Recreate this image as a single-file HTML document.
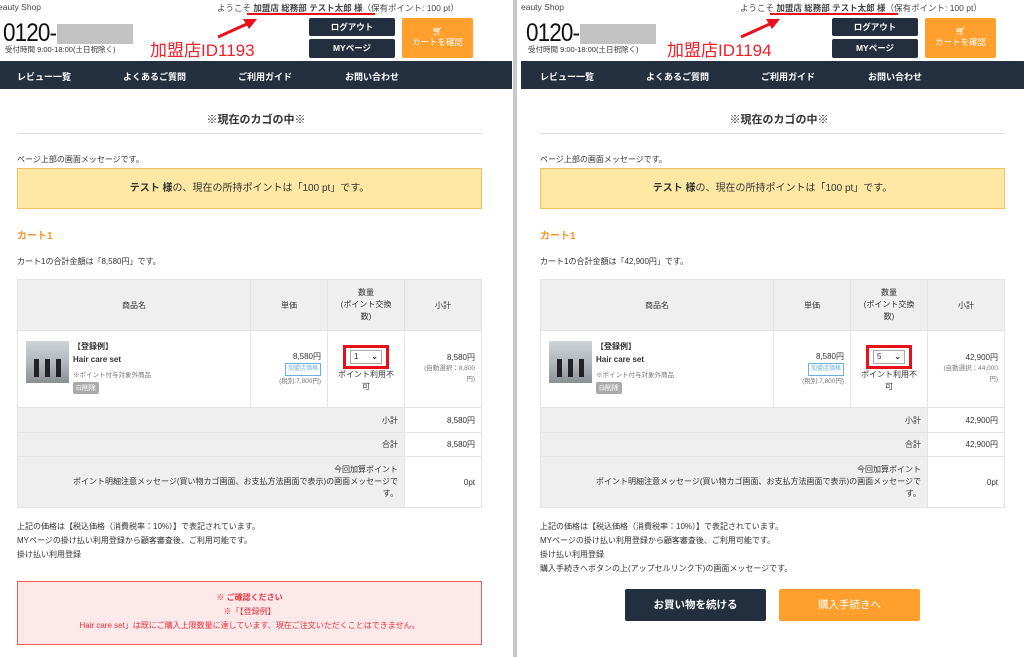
<!DOCTYPE html>
<html><head><meta charset="utf-8"><style>
*{margin:0;padding:0;box-sizing:border-box}
body{width:1024px;height:657px;overflow:hidden;background:#fff;position:relative;font-family:"Liberation Sans","Noto Sans CJK JP",sans-serif;color:#333}
.p{position:absolute;top:0;height:657px;overflow:hidden;background:#fff}
.a{position:absolute;white-space:nowrap}
.btn{position:absolute;background:#232f3e;color:#fff;font-size:8.5px;font-weight:bold;text-align:center;border-radius:2px}
.nav{position:absolute;left:0;top:61px;width:540px;height:28px;background:#243040}
.nav span{position:absolute;top:9px;color:#fff;font-size:9px;font-weight:bold}
table{position:absolute;left:17px;top:279px;width:465px;border-collapse:collapse;font-size:8px;color:#333}
td{border:1px solid #e4e4e4;vertical-align:middle}
.hd td{background:#efefef;text-align:center;height:51px}
.gr{background:#efefef;text-align:right;padding-right:6px}
.rt{text-align:right;padding-right:6px}
.small{font-size:6.5px;color:#777}
.note{font-size:8px;line-height:14px}
.tel{position:absolute;left:3px;top:19px;font-size:25px;color:#111;letter-spacing:-1px;transform:scaleX(.9);transform-origin:left}
</style></head><body>

<!-- LEFT PANEL -->
<div class="p" style="left:0;width:512px">
<div class="a" style="left:-2px;top:2px;font-size:8.5px;color:#444">eauty Shop</div>
<div class="a" style="left:217px;top:2px;font-size:8.5px;color:#444">ようこそ <b>加盟店 総務部 テスト太郎 様</b>（保有ポイント: 100 pt）</div>
<div class="a" style="left:247px;top:13px;width:128px;height:2px;background:#e8101a"></div>
<svg class="a" style="left:215px;top:17px" width="45" height="24"><line x1="3" y1="20" x2="34" y2="6" stroke="#e8101a" stroke-width="3"/><polygon points="42,2 28,2 34,12" fill="#e8101a"/></svg>
<div class="tel">0120-</div>
<div class="a" style="left:57px;top:24px;width:76px;height:20px;background:#c2c2c2"></div>
<div class="a" style="left:5px;top:44px;font-size:7.5px;color:#333">受付時間 9:00-18:00(土日祝除く)</div>
<div class="a" style="left:150px;top:36px;font-size:17px;color:#f0202a">加盟店ID1193</div>
<div class="btn" style="left:309px;top:18px;width:86px;height:18px;line-height:18px">ログアウト</div>
<div class="btn" style="left:309px;top:39px;width:86px;height:19px;line-height:19px">MYページ</div>
<div class="btn" style="left:402px;top:18px;width:71px;height:40px;background:#ffa02e;font-weight:normal;line-height:11px;padding-top:8px">🛒︎<br>カートを確認</div>
<div class="nav"><span style="left:17px">レビュー一覧</span><span style="left:123px">よくあるご質問</span><span style="left:238px">ご利用ガイド</span><span style="left:345px">お問い合わせ</span></div>
<div class="a" style="left:0;width:512px;text-align:center;top:111px;font-size:11px;font-weight:bold">※現在のカゴの中※</div>
<div class="a" style="left:17px;top:133px;width:465px;height:1px;background:#ddd"></div>
<div class="a" style="left:17px;top:154px;font-size:8px">ページ上部の画面メッセージです。</div>
<div class="a" style="left:17px;top:168px;width:465px;height:41px;background:#ffe8a3;border:1px solid #f4bf5c;text-align:center;line-height:39px;font-size:10px"><b>テスト 様</b>の、現在の所持ポイントは「100 pt」です。</div>
<div class="a" style="left:17px;top:227px;font-size:10px;font-weight:bold;color:#f5962a">カート1</div>
<div class="a" style="left:17px;top:256px;font-size:8px">カート1の合計金額は「8,580円」です。</div>
<table>
<tr class="hd"><td style="width:233px">商品名</td><td style="width:77px">単価</td><td style="width:77px;line-height:12px">数量<br>(ポイント交換<br>数)</td><td>小計</td></tr>
<tr style="height:77px"><td><div style="position:relative;height:75px">
<div class="a" style="left:8px;top:9px;width:43px;height:42px;background:linear-gradient(#d0d4d8,#aeb4ba 55%,#8a8f94)"><div style="position:absolute;left:8px;top:18px;width:5px;height:18px;background:#222"></div><div style="position:absolute;left:19px;top:18px;width:5px;height:18px;background:#222"></div><div style="position:absolute;left:30px;top:18px;width:5px;height:18px;background:#222"></div></div>
<div class="a" style="left:55px;top:9px;font-weight:bold">【登録例】</div>
<div class="a" style="left:55px;top:23px;font-weight:bold">Hair care set</div>
<div class="a small" style="left:55px;top:37px">※ポイント付与対象外商品</div>
<div class="a" style="left:55px;top:50px;background:#aaa;color:#fff;font-size:7px;padding:1px 3px;border-radius:2px">⊟削除</div>
</div></td>
<td class="rt" style="line-height:11px"><div>8,580円</div><div style="display:inline-block;border:1px solid #6ab0e0;color:#6ab0e0;font-size:6px;padding:0 2px">加盟店価格</div><div class="small">(税別:7,800円)</div></td>
<td style="text-align:center;line-height:12px"><div style="display:inline-block;border:3px solid #e8101a;padding:2px 4px"><div style="width:32px;height:14px;border:1px solid #aaa;text-align:left;padding-left:3px;font-size:8px;line-height:12px">1 <b style="float:right;margin-right:3px">⌄</b></div></div><div>ポイント利用不<br>可</div></td>
<td class="rt" style="line-height:10px">8,580円<br><span class="small">(自動選択：8,800<br>円)</span></td></tr>
<tr style="height:25px"><td class="gr" colspan="3">小計</td><td class="rt">8,580円</td></tr>
<tr style="height:24px"><td class="gr" colspan="3">合計</td><td class="rt">8,580円</td></tr>
<tr style="height:51px"><td class="gr" colspan="3" style="line-height:12px">今回加算ポイント<br>ポイント明細注意メッセージ(買い物カゴ画面、お支払方法画面で表示)の画面メッセージで<br>す。</td><td class="rt">0pt</td></tr>
</table>
<div class="a note" style="left:17px;top:520px">上記の価格は【税込価格（消費税率：10%）】で表記されています。<br>MYページの掛け払い利用登録から顧客審査後、ご利用可能です。<br>掛け払い利用登録</div>
<div class="a" style="left:17px;top:581px;width:465px;height:64px;background:#fde8ea;border:1px solid #f45a5a;text-align:center;color:#f0303a;font-size:8px;line-height:14px;padding-top:9px"><b>※ ご確認ください</b><br>※「【登録例】<br>Hair care set」は既にご購入上限数量に達しています、現在ご注文いただくことはできません。</div>
</div>

<div class="a" style="left:513px;top:0;width:4px;height:657px;background:#c8c8c8"></div>

<!-- RIGHT PANEL -->
<div class="p" style="left:517px;width:507px">
<div style="position:absolute;left:6px;top:0;width:512px;height:657px">
<div class="a" style="left:-2px;top:2px;font-size:8.5px;color:#444">eauty Shop</div>
<div class="a" style="left:217px;top:2px;font-size:8.5px;color:#444">ようこそ <b>加盟店 総務部 テスト太郎 様</b>（保有ポイント: 100 pt）</div>
<div class="a" style="left:247px;top:13px;width:128px;height:2px;background:#e8101a"></div>
<svg class="a" style="left:215px;top:17px" width="45" height="24"><line x1="3" y1="20" x2="34" y2="6" stroke="#e8101a" stroke-width="3"/><polygon points="42,2 28,2 34,12" fill="#e8101a"/></svg>
<div class="tel">0120-</div>
<div class="a" style="left:57px;top:24px;width:76px;height:20px;background:#c2c2c2"></div>
<div class="a" style="left:5px;top:44px;font-size:7.5px;color:#333">受付時間 9:00-18:00(土日祝除く)</div>
<div class="a" style="left:144px;top:36px;font-size:17px;color:#f0202a">加盟店ID1194</div>
<div class="btn" style="left:309px;top:18px;width:86px;height:18px;line-height:18px">ログアウト</div>
<div class="btn" style="left:309px;top:39px;width:86px;height:19px;line-height:19px">MYページ</div>
<div class="btn" style="left:402px;top:18px;width:71px;height:40px;background:#ffa02e;font-weight:normal;line-height:11px;padding-top:8px">🛒︎<br>カートを確認</div>
<div class="nav" style="left:-2px"><span style="left:19px">レビュー一覧</span><span style="left:125px">よくあるご質問</span><span style="left:240px">ご利用ガイド</span><span style="left:347px">お問い合わせ</span></div>
<div class="a" style="left:0;width:512px;text-align:center;top:111px;font-size:11px;font-weight:bold">※現在のカゴの中※</div>
<div class="a" style="left:17px;top:133px;width:465px;height:1px;background:#ddd"></div>
<div class="a" style="left:17px;top:154px;font-size:8px">ページ上部の画面メッセージです。</div>
<div class="a" style="left:17px;top:168px;width:465px;height:41px;background:#ffe8a3;border:1px solid #f4bf5c;text-align:center;line-height:39px;font-size:10px"><b>テスト 様</b>の、現在の所持ポイントは「100 pt」です。</div>
<div class="a" style="left:17px;top:227px;font-size:10px;font-weight:bold;color:#f5962a">カート1</div>
<div class="a" style="left:17px;top:256px;font-size:8px">カート1の合計金額は「42,900円」です。</div>
<table>
<tr class="hd"><td style="width:233px">商品名</td><td style="width:77px">単価</td><td style="width:77px;line-height:12px">数量<br>(ポイント交換<br>数)</td><td>小計</td></tr>
<tr style="height:77px"><td><div style="position:relative;height:75px">
<div class="a" style="left:8px;top:9px;width:43px;height:42px;background:linear-gradient(#d0d4d8,#aeb4ba 55%,#8a8f94)"><div style="position:absolute;left:8px;top:18px;width:5px;height:18px;background:#222"></div><div style="position:absolute;left:19px;top:18px;width:5px;height:18px;background:#222"></div><div style="position:absolute;left:30px;top:18px;width:5px;height:18px;background:#222"></div></div>
<div class="a" style="left:55px;top:9px;font-weight:bold">【登録例】</div>
<div class="a" style="left:55px;top:23px;font-weight:bold">Hair care set</div>
<div class="a small" style="left:55px;top:37px">※ポイント付与対象外商品</div>
<div class="a" style="left:55px;top:50px;background:#aaa;color:#fff;font-size:7px;padding:1px 3px;border-radius:2px">⊟削除</div>
</div></td>
<td class="rt" style="line-height:11px"><div>8,580円</div><div style="display:inline-block;border:1px solid #6ab0e0;color:#6ab0e0;font-size:6px;padding:0 2px">加盟店価格</div><div class="small">(税別:7,800円)</div></td>
<td style="text-align:center;line-height:12px"><div style="display:inline-block;border:3px solid #e8101a;padding:2px 4px"><div style="width:32px;height:14px;border:1px solid #aaa;text-align:left;padding-left:3px;font-size:8px;line-height:12px">5 <b style="float:right;margin-right:3px">⌄</b></div></div><div>ポイント利用不<br>可</div></td>
<td class="rt" style="line-height:10px">42,900円<br><span class="small">(自動選択：44,000<br>円)</span></td></tr>
<tr style="height:25px"><td class="gr" colspan="3">小計</td><td class="rt">42,900円</td></tr>
<tr style="height:24px"><td class="gr" colspan="3">合計</td><td class="rt">42,900円</td></tr>
<tr style="height:51px"><td class="gr" colspan="3" style="line-height:12px">今回加算ポイント<br>ポイント明細注意メッセージ(買い物カゴ画面、お支払方法画面で表示)の画面メッセージで<br>す。</td><td class="rt">0pt</td></tr>
</table>
<div class="a note" style="left:17px;top:520px">上記の価格は【税込価格（消費税率：10%）】で表記されています。<br>MYページの掛け払い利用登録から顧客審査後、ご利用可能です。<br>掛け払い利用登録<br>購入手続きへボタンの上(アップセルリンク下)の画面メッセージです。</div>
<div class="btn" style="left:102px;top:589px;width:141px;height:32px;line-height:32px;font-size:10.5px">お買い物を続ける</div>
<div class="btn" style="left:256px;top:589px;width:141px;height:32px;line-height:32px;font-size:10.5px;background:#ffa02e;font-weight:normal">購入手続きへ</div>
</div>
</div>
</body></html>
